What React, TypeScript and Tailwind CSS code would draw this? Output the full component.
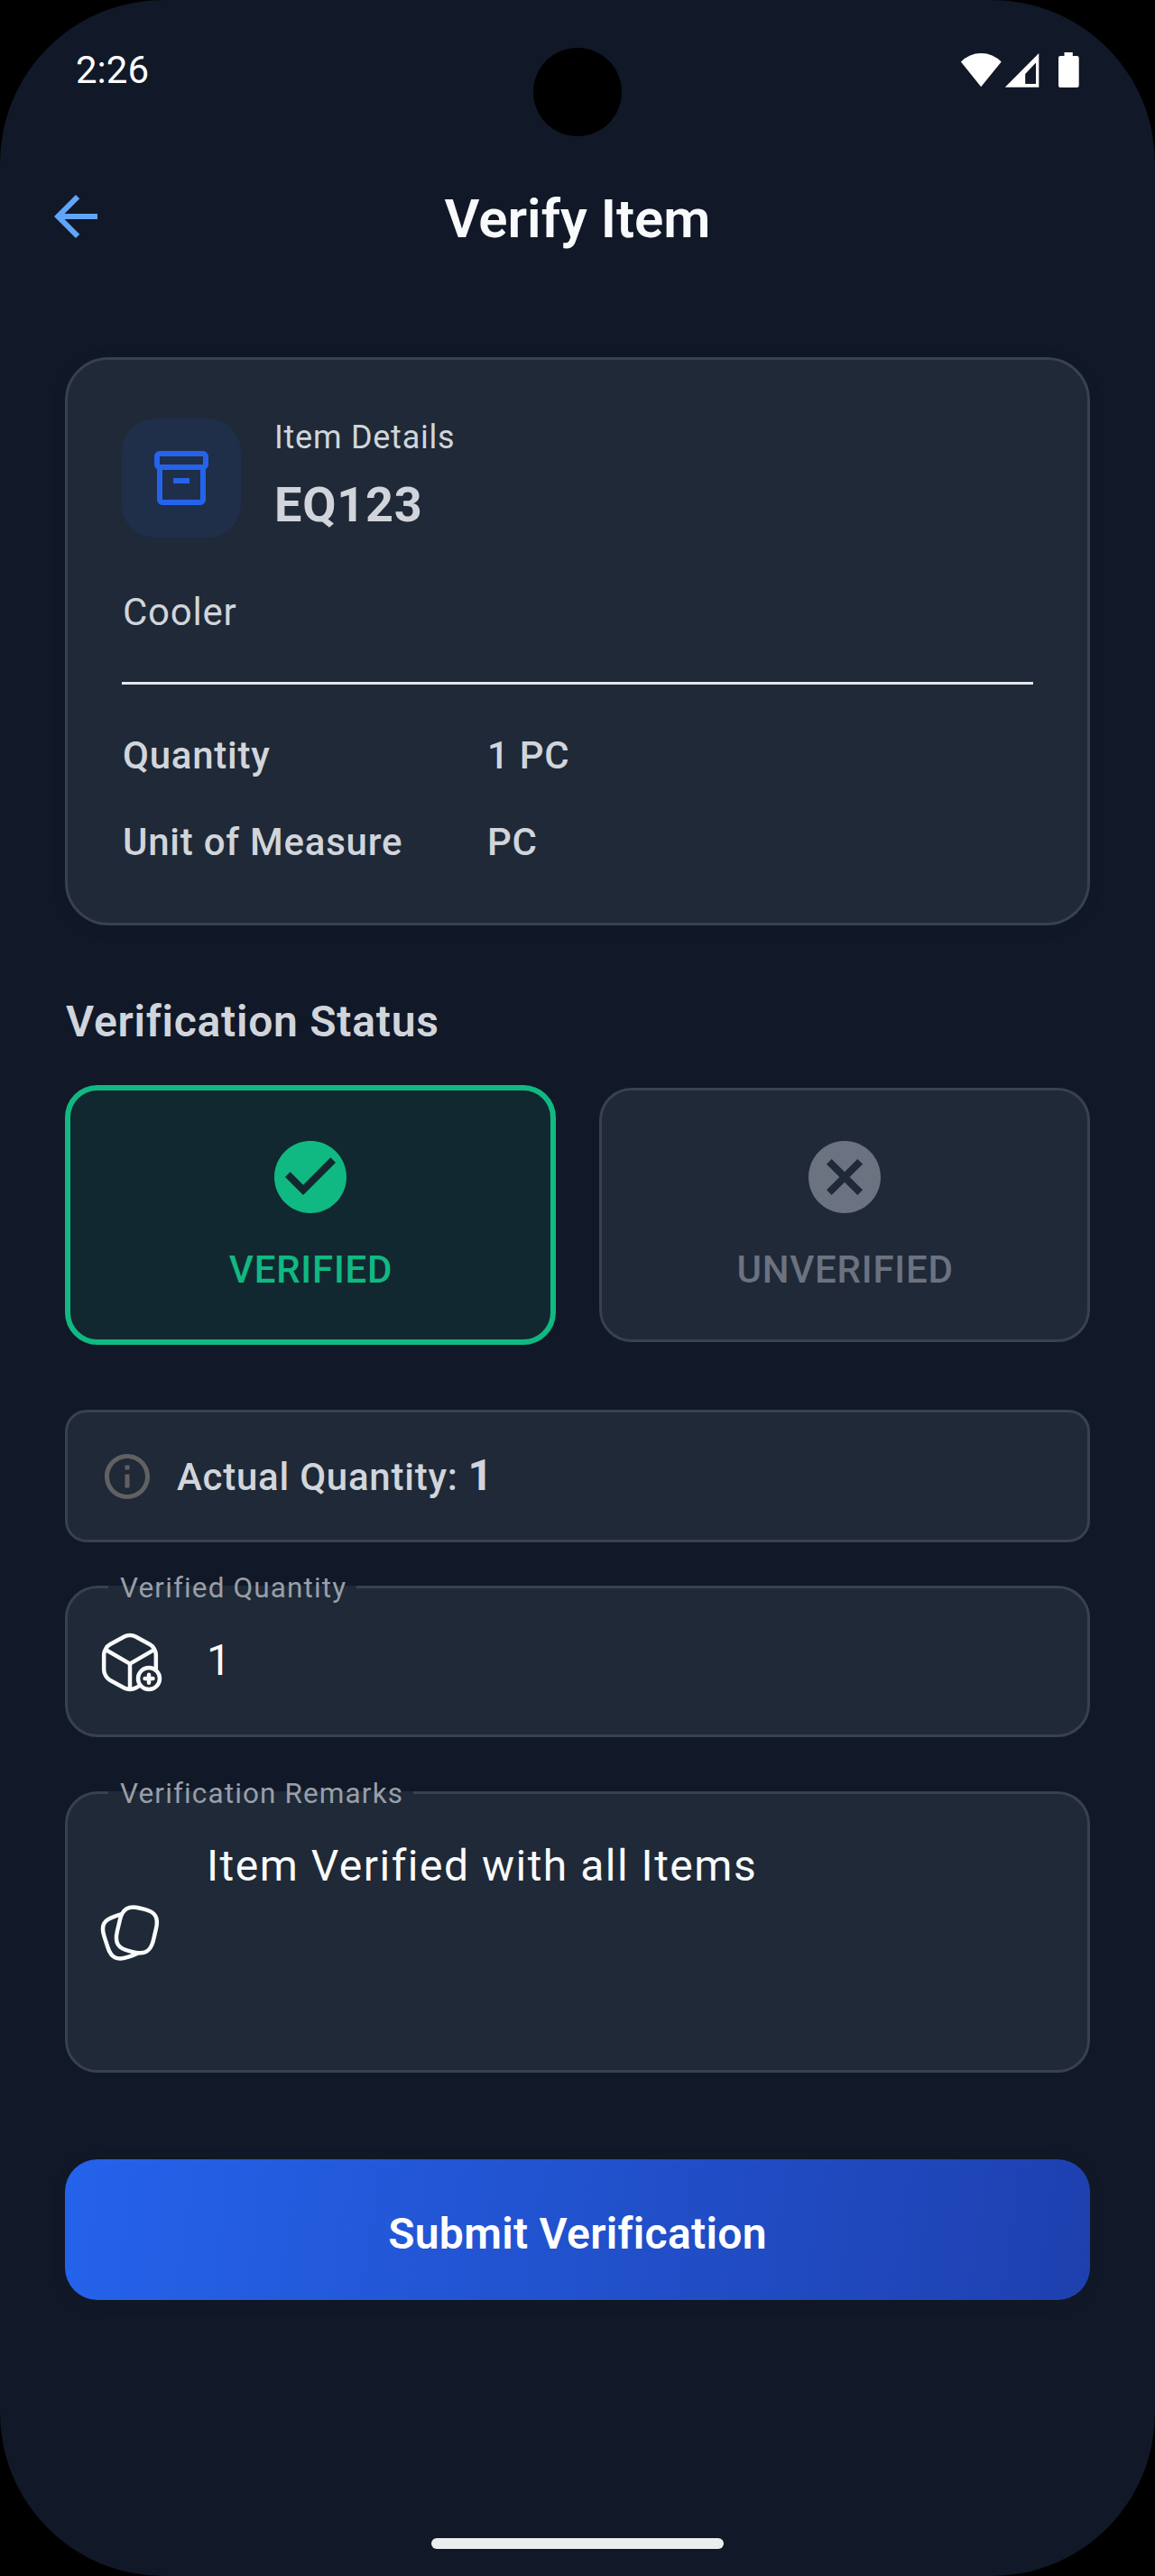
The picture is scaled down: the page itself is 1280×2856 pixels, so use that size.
import React from "react";

function StatusBar() {
  return (
    <div className="flex h-[156px] items-start justify-between pr-[82px] pl-[84px]">
      <span className="pt-[50px] text-[42px] leading-[56px] text-white">2:26</span>
      <svg className="mt-[56px] h-[42px] w-[134px]" viewBox="0 0 134 42" fill="#fff">
        <path d="M23.2 40.2 L0.9 12.6 A31 31 0 0 1 45.7 12.6 Z" />
        <path fillRule="evenodd" d="M87.3 3 V40.8 H49.8 Z M84 13.5 L72.2 26 V37 H84 Z" />
        <path d="M115.5 2 H124.8 V6 H129.5 Q131.7 6 131.7 8.2 V38.8 Q131.7 41 129.5 41 H111 Q109 41 109 38.8 V8.2 Q109 6 111 6 H115.5 Z" />
      </svg>
    </div>
  );
}

function Header() {
  return (
    <header className="grid h-[168px] grid-cols-[72px_1fr_72px] items-center px-12">
      <svg viewBox="0 0 24 24" className="size-[72px]" fill="#60a5fa">
        <path d="M20 11H7.83l5.59-5.59L12 4l-8 8 8 8 1.41-1.41L7.83 13H20v-2z" />
      </svg>
      <h1 className="pt-[5px] text-center text-[60px] leading-[72px] font-semibold text-gray-50">Verify Item</h1>
    </header>
  );
}

function DetailRow({ label, value, className }: { label: string; value: string; className: string }) {
  return (
    <div className={`grid grid-cols-[404px_1fr] pl-px text-[42px] leading-[54px] font-medium tracking-[0.75px] ${className}`}>
      <span>{label}</span>
      <span>{value}</span>
    </div>
  );
}

function ItemCard() {
  return (
    <section className="h-[630px] rounded-[48px] border-[3px] border-[#374151] bg-[#1f2937] p-[60px] text-[#d1d5db] shadow-[0_3px_20px_rgba(0,0,0,0.06)]">
      <div className="flex h-[142px] items-center gap-9">
        <div className="flex size-[132px] items-center justify-center rounded-[36px] bg-[#1f2e49]">
          <svg viewBox="0 0 24 24" className="size-[72px]" fill="#2563eb">
            <path d="M20 2H4c-1 0-2 .9-2 2v3.01c0 .72.43 1.34 1 1.69V20c0 1.1 1.1 2 2 2h14c.9 0 2-.9 2-2V8.7c.57-.35 1-.97 1-1.69V4c0-1.1-1-2-2-2zm-1 18H5V9h14v11zm1-13H4V4h16v3z" />
            <path d="M9 12h6v2H9z" />
          </svg>
        </div>
        <div className="pb-[3px] pl-px">
          <p className="text-[36px] leading-[54px] tracking-[0.75px]">Item Details</p>
          <p className="mt-[9px] text-[54px] leading-[78px] font-bold tracking-[0.8px]">EQ123</p>
        </div>
      </div>
      <p className="mt-[51px] pl-px text-[42px] leading-[54px] tracking-[0.75px]">Cooler</p>
      <div className="mt-[50px] h-[3px] bg-[#e5e7eb]" />
      <DetailRow label="Quantity" value="1 PC" className="mt-[52px]" />
      <DetailRow label="Unit of Measure" value="PC" className="mt-[42px]" />
    </section>
  );
}

function StatusOptions() {
  return (
    <div className="mt-10 grid h-[288px] grid-cols-2 items-center gap-12 text-[42px] leading-[54px] font-medium">
      <button className="flex h-[288px] flex-col items-center rounded-[36px] border-[6px] border-[#10b981] bg-[#112830] pt-12 text-[#10b981]">
        <svg viewBox="0 0 24 24" className="size-24" fill="currentColor">
          <path d="M12 2C6.48 2 2 6.48 2 12s4.48 10 10 10 10-4.48 10-10S17.52 2 12 2zm-2 15l-5-5 1.41-1.41L10 14.17l7.59-7.59L19 8l-9 9z" />
        </svg>
        <span className="mt-7 pl-px tracking-[0.75px]">VERIFIED</span>
      </button>
      <button className="flex h-[282px] flex-col items-center rounded-[36px] border-[3px] border-[#374151] bg-[#1f2937] pt-12 text-[#6b7280]">
        <svg viewBox="0 0 24 24" className="size-24" fill="currentColor">
          <path d="M12 2C6.47 2 2 6.47 2 12s4.47 10 10 10 10-4.47 10-10S17.53 2 12 2zm5 13.59L15.59 17 12 13.41 8.41 17 7 15.59 10.59 12 7 8.41 8.41 7 12 10.59 15.59 7 17 8.41 13.41 12 17 15.59z" />
        </svg>
        <span className="mt-7 pl-px tracking-[0.75px]">UNVERIFIED</span>
      </button>
    </div>
  );
}

function ActualQuantity() {
  return (
    <div className="mt-[72px] flex h-[147px] items-center gap-6 rounded-[24px] border-[3px] border-[#374151] bg-[#1f2937] px-9 text-[#d1d5db]">
      <svg viewBox="0 0 24 24" className="size-[60px]" fill="#616161">
        <path d="M11 7h2v2h-2zm0 4h2v6h-2zm1-9C6.48 2 2 6.48 2 12s4.48 10 10 10 10-4.48 10-10S17.52 2 12 2zm0 18c-4.41 0-8-3.59-8-8s3.59-8 8-8 8 3.59 8 8-3.59 8-8 8z" />
      </svg>
      <p className="flex items-baseline pt-[1px] pl-px leading-[54px]">
        <span className="text-[42px] font-medium tracking-[0.75px]">Actual Quantity:</span>
        <span className="ml-[11px] text-[48px] font-bold">1</span>
      </p>
    </div>
  );
}

function Field({ label, className, children }: { label: string; className: string; children: React.ReactNode }) {
  return (
    <div className={`relative flex gap-12 rounded-[36px] border-[3px] border-[#374151] bg-[#1f2937] pl-[33px] text-gray-50 ${className}`}>
      <span className="absolute -top-[3px] left-[45px] h-[3px] bg-[#1f2937] pr-[11px] pl-[13px] text-[31.5px] leading-[6px] tracking-[1.13px] whitespace-nowrap text-[#989fa8]">
        {label}
      </span>
      {children}
    </div>
  );
}

export default function App() {
  return (
    <div className="h-[2856px] w-[1280px] bg-black font-[Roboto,sans-serif]">
      <div className="relative flex h-full flex-col rounded-[181px] bg-[#111827]">
        <div className="absolute top-[53px] left-[591px] size-[98px] rounded-full bg-black" />
        <StatusBar />
        <Header />
        <main className="flex flex-col px-[72px] pt-[72px]">
          <ItemCard />
          <h2 className="mt-[77px] pl-px text-[48px] leading-[60px] font-semibold tracking-[0.75px] text-[#d1d5db]">
            Verification Status
          </h2>
          <StatusOptions />
          <ActualQuantity />
          <Field label="Verified Quantity" className="mt-12 h-[168px]">
            <svg
              viewBox="0 0 24 24"
              className="mt-[46px] size-[72px]"
              fill="none"
              stroke="currentColor"
              strokeWidth="1.5"
              strokeLinecap="round"
              strokeLinejoin="round"
            >
              <path d="M3.17 7.44 12 12.55l8.77-5.08M12 21.61v-9.07" />
              <path d="M21.61 14.9V9.17c0-1.38-.99-3.06-2.2-3.73l-5.34-2.96c-1.14-.64-3-.64-4.14 0L4.59 5.44c-1.21.67-2.2 2.35-2.2 3.73v5.66c0 1.38.99 3.06 2.2 3.73l5.34 2.96c.57.32 1.32.48 2.07.48s1.5-.16 2.07-.48l1.3-.72" />
              <circle cx="19" cy="18" r="4" />
              <path d="M20.49 18.04h-2.98M19 16.58v2.99" />
            </svg>
            <p className="pt-[50px] pl-px text-[48px] leading-[60px] tracking-[1.5px]">1</p>
          </Field>
          <Field label="Verification Remarks" className="mt-[60px] h-[312px]">
            <svg
              viewBox="0 0 24 24"
              className="mt-[118px] size-[72px]"
              fill="none"
              stroke="currentColor"
              strokeWidth="1.5"
              strokeLinecap="round"
              strokeLinejoin="round"
            >
              <path d="M21.66 10.44l-.98 4.18c-.84 3.61-2.5 5.07-5.62 4.77-.5-.04-1.04-.13-1.62-.27l-1.68-.4c-4.17-.99-5.46-3.05-4.48-7.23l.98-4.19c.2-.85.44-1.59.74-2.2 1.17-2.42 3.16-3.07 6.5-2.28l1.67.39c4.19.98 5.47 3.05 4.49 7.23z" />
              <path d="M15.06 19.39c-.62.42-1.4.77-2.35 1.08l-1.58.52c-3.97 1.28-6.06.21-7.35-3.76L2.5 13.28c-1.28-3.97-.22-6.07 3.75-7.35l1.58-.52c.41-.13.8-.24 1.17-.31" />
            </svg>
            <p className="pt-[50px] pl-px text-[48px] leading-[60px] tracking-[1.5px]">Item Verified with all Items</p>
          </Field>
          <button className="mt-24 h-[156px] rounded-[36px] bg-[linear-gradient(97.82deg,#2563eb,#1e40af)] pt-[10px] text-[48px] leading-[60px] font-semibold tracking-[0.3px] text-white shadow-[0_3px_20px_rgba(0,0,0,0.06)]">
            Submit Verification
          </button>
        </main>
        <div className="mt-[264px] h-3 w-[324px] self-center rounded-full bg-[#ebedef]" />
      </div>
    </div>
  );
}
